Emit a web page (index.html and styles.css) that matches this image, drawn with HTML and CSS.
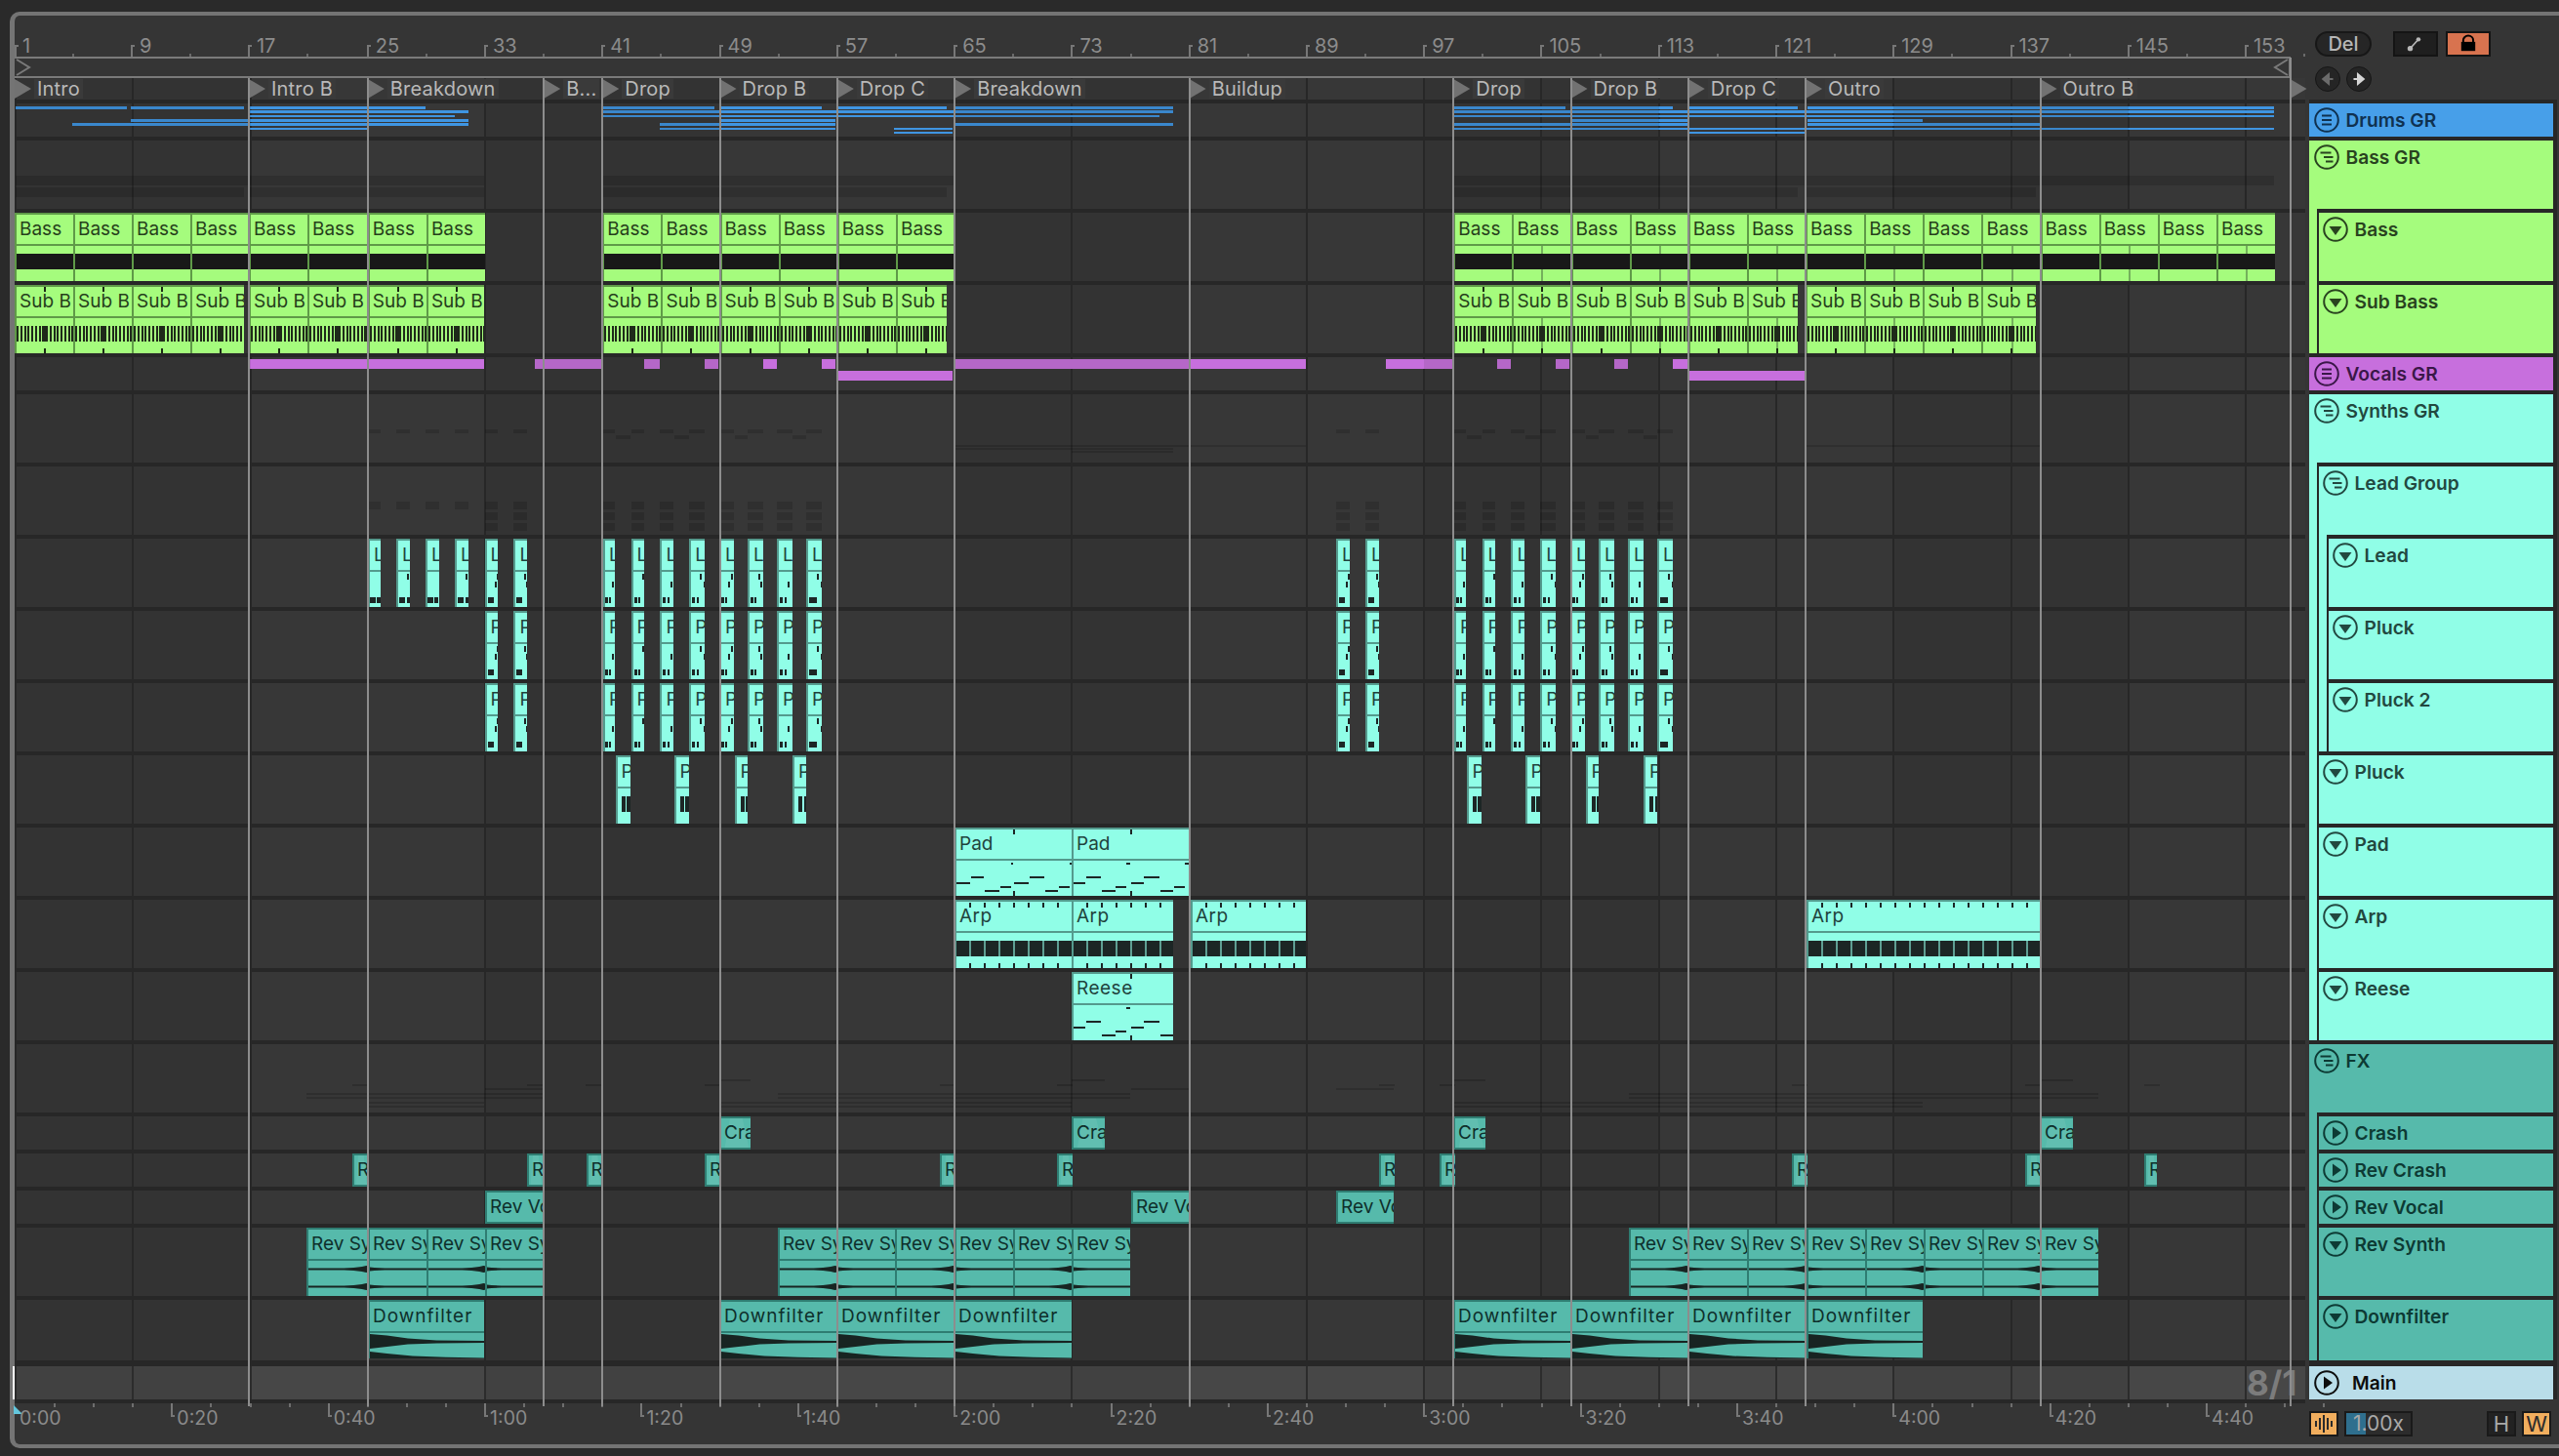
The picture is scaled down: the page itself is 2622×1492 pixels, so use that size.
FILE: index.html
```html
<!DOCTYPE html>
<html lang="en">
<head>
<meta charset="utf-8">
<title>Arrangement</title>
<link rel="stylesheet" href="styles.css">
</head>
<body>
<svg class="defs" width="0" height="0" aria-hidden="true">
  <symbol id="i-group" viewBox="0 0 26 26"><circle cx="13" cy="13" r="11.8" fill="none" stroke="currentColor" stroke-width="2"/><path d="M8 8.5h10M8 13h10M8 17.500h10" stroke="currentColor" stroke-width="2.200"/></symbol>
  <symbol id="i-stagger" viewBox="0 0 26 26"><circle cx="13" cy="13" r="11.8" fill="none" stroke="currentColor" stroke-width="2"/><path d="M6.500 8.500h11M10 13h9.500M12 17.500h7.500" stroke="currentColor" stroke-width="2.200"/></symbol>
  <symbol id="i-down" viewBox="0 0 26 26"><circle cx="13" cy="13" r="11.800" fill="none" stroke="currentColor" stroke-width="2"/><path d="M6.500 10h13L13 19z" fill="currentColor"/></symbol>
  <symbol id="i-right" viewBox="0 0 26 26"><circle cx="13" cy="13" r="11.800" fill="none" stroke="currentColor" stroke-width="2"/><path d="M10 6.500L19 13l-9 6.500z" fill="currentColor"/></symbol>
</svg>
<div class="frame">
  <main class="arr" id="arr">
    <div class="ruler" id="ruler"></div>
    <div class="brace">
      <svg class="brace-l" viewBox="0 0 16 18" width="16" height="18"><path d="M1 1L14 9L1 17" fill="none" stroke="#7a7a7a" stroke-width="2"/></svg>
      <svg class="brace-r" viewBox="0 0 16 18" width="16" height="18"><path d="M15 1L2 9L15 17" fill="none" stroke="#7a7a7a" stroke-width="2"/></svg>
    </div>
    <div class="locators lane-bg" id="locators"></div>
    <div class="lanes">
      <div class="lane lane-bg h34" id="l-drums"></div>
      <div class="lane lane-bg h70" id="l-bassgr"></div>
      <div class="lane lane-bg h70" id="l-bass"></div>
      <div class="lane lane-bg h70" id="l-sub"></div>
      <div class="lane lane-bg h34" id="l-vocals"></div>
      <div class="lane lane-bg h70" id="l-synths"></div>
      <div class="lane lane-bg h70" id="l-leadgrp"></div>
      <div class="lane lane-bg h70" id="l-lead"></div>
      <div class="lane lane-bg h70" id="l-pluck"></div>
      <div class="lane lane-bg h70" id="l-pluck2"></div>
      <div class="lane lane-bg h70" id="l-pluck3"></div>
      <div class="lane lane-bg h70" id="l-pad"></div>
      <div class="lane lane-bg h70" id="l-arp"></div>
      <div class="lane lane-bg h70" id="l-reese"></div>
      <div class="lane lane-bg h70" id="l-fx"></div>
      <div class="lane lane-bg h34" id="l-crash"></div>
      <div class="lane lane-bg h34" id="l-revcrash"></div>
      <div class="lane lane-bg h34" id="l-revvocal"></div>
      <div class="lane lane-bg h70" id="l-revsynth"></div>
      <div class="lane lane-bg h62" id="l-down"></div>
    </div>
    <div class="main-lane" id="l-main">
      <span class="playhead"></span>
      <span class="meter">8/1</span>
    </div>
    <div class="timeline" id="timeline"><span class="origin"></span></div>
  </main>

  <aside class="side">
    <div class="controls">
      <div class="ctl-row">
        <button class="pill">Del</button>
        <button class="sq sq-first"><svg viewBox="0 0 46 26" width="42" height="22"><path d="M17 18L26 8" stroke="#b8b8b8" stroke-width="2"/><circle cx="16.500" cy="18.500" r="3.200" fill="#b8b8b8"/><circle cx="26.500" cy="7.500" r="2.600" fill="#b8b8b8"/></svg></button>
        <button class="sq sq-lock"><svg viewBox="0 0 46 26" width="42" height="22"><path d="M17 11V8.500a6 5.500 0 0 1 12 0V11" fill="none" stroke="#000" stroke-width="2.400"/><rect x="14.500" y="10.500" width="17" height="11" fill="#000"/></svg></button>
      </div>
      <div class="ctl-row nav-row">
        <button class="nav"><svg viewBox="0 0 26 26" width="26" height="26"><path d="M19 13H10M14 8l-6 5 6 5z" stroke="#6b6b6b" stroke-width="2.400" fill="#6b6b6b"/></svg></button>
        <button class="nav"><svg viewBox="0 0 26 26" width="26" height="26"><path d="M7 13h9M12 8l6 5-6 5z" stroke="#d6d6d6" stroke-width="2.400" fill="#d6d6d6"/></svg></button>
      </div>
    </div>
    <div class="heads">
      <div class="thead h34 c-drums"><svg class="ico"><use href="#i-group"/></svg><span>Drums GR</span></div>
      <div class="group c-bass">
        <div class="thead h70"><svg class="ico"><use href="#i-stagger"/></svg><span>Bass GR</span></div>
        <div class="children">
          <div class="thead h70"><svg class="ico"><use href="#i-down"/></svg><span>Bass</span></div>
          <div class="thead h70"><svg class="ico"><use href="#i-down"/></svg><span>Sub Bass</span></div>
        </div>
      </div>
      <div class="thead h34 c-vocals"><svg class="ico"><use href="#i-group"/></svg><span>Vocals GR</span></div>
      <div class="group c-synths">
        <div class="thead h70"><svg class="ico"><use href="#i-stagger"/></svg><span>Synths GR</span></div>
        <div class="children">
          <div class="group">
            <div class="thead h70"><svg class="ico"><use href="#i-stagger"/></svg><span>Lead Group</span></div>
            <div class="children">
              <div class="thead h70"><svg class="ico"><use href="#i-down"/></svg><span>Lead</span></div>
              <div class="thead h70"><svg class="ico"><use href="#i-down"/></svg><span>Pluck</span></div>
              <div class="thead h70"><svg class="ico"><use href="#i-down"/></svg><span>Pluck 2</span></div>
            </div>
          </div>
          <div class="thead h70"><svg class="ico"><use href="#i-down"/></svg><span>Pluck</span></div>
          <div class="thead h70"><svg class="ico"><use href="#i-down"/></svg><span>Pad</span></div>
          <div class="thead h70"><svg class="ico"><use href="#i-down"/></svg><span>Arp</span></div>
          <div class="thead h70"><svg class="ico"><use href="#i-down"/></svg><span>Reese</span></div>
        </div>
      </div>
      <div class="group c-fx">
        <div class="thead h70"><svg class="ico"><use href="#i-stagger"/></svg><span>FX</span></div>
        <div class="children">
          <div class="thead h34"><svg class="ico"><use href="#i-right"/></svg><span>Crash</span></div>
          <div class="thead h34"><svg class="ico"><use href="#i-right"/></svg><span>Rev Crash</span></div>
          <div class="thead h34"><svg class="ico"><use href="#i-right"/></svg><span>Rev Vocal</span></div>
          <div class="thead h70"><svg class="ico"><use href="#i-down"/></svg><span>Rev Synth</span></div>
          <div class="thead h62"><svg class="ico"><use href="#i-down"/></svg><span>Downfilter</span></div>
        </div>
      </div>
      <div class="thead h34 c-main"><svg class="ico"><use href="#i-right"/></svg><span>Main</span></div>
    </div>
    <div class="foot">
      <button class="fbtn on"><svg viewBox="0 0 26 22" width="26" height="22"><path d="M5 8v6M9 5v12M13 2v18M17 5v12M21 8v6" stroke="#2b2b2b" stroke-width="2"/></svg></button>
      <div class="speed"><span class="speed-fill"></span><span class="speed-txt">1.00x</span></div>
      <button class="fbtn first-right">H</button>
      <button class="fbtn on">W</button>
    </div>
  </aside>
</div>
<script src="app.js"></script>
</body>
</html>
```
FILE: styles.css
```css
* { box-sizing: border-box; }
:root {
  --sep: #272727;
  --panel: #353535;
  --grid: #272727;
  --font: "Inter", "Liberation Sans", sans-serif;
}
html, body { margin: 0; padding: 0; }
body {
  width: 2622px; height: 1492px; overflow: hidden;
  background: #2a2a2a; font-family: var(--font);
}
.defs { position: absolute; }
.frame {
  margin: 12px 0 0 10px; height: 1472px; width: 2612px;
  border: solid #747474; border-width: 4px 0 4px 5px;
  border-radius: 10px 0 0 10px;
  background: var(--panel);
  display: flex;
}
.arr { position: relative; width: 2351px; flex: none; display: flex; flex-direction: column; }

/* ruler */
.ruler { position: relative; height: 42px; flex: none; }
.bar-tick { position: absolute; top: 30px; height: 12px; width: 4px; border: solid #777; border-width: 2px 0 0 2px; }
.bar-num { position: absolute; top: 18px; font-size: 20px; line-height: 26px; color: #8c8c8c; letter-spacing: -.1px; }
.mid-tick { position: absolute; top: 39px; height: 3px; width: 2px; background: #6a6a6a; }

.brace {
  position: relative; height: 22px; width: 2332px; flex: none;
  border: solid #7a7a7a; border-width: 2px 2px 2px 0;
}
.brace-l { position: absolute; left: 1px; top: 0; }
.brace-r { position: absolute; right: 0; top: 0; }

/* lanes */
.lane-bg {
  background-color: #343434;
  background-image:
    repeating-linear-gradient(90deg, var(--grid) 0, var(--grid) 2px, transparent 2px, transparent 120.267px),
    repeating-linear-gradient(90deg, #333333 0, #333333 240.533px, #373737 240.533px, #373737 481.067px);
  background-position: 0 0, 1px 0;
}
.locators { position: relative; height: 22px; width: 2347px; flex: none; }
.loc { position: absolute; top: 1px; height: 20px; display: flex; align-items: center; gap: 3px; }
.loc-tri { width: 17px; height: 20px; background: #727272; clip-path: polygon(0 0, 100% 50%, 0 100%); flex: none; }
.loc-name { font-size: 20px; line-height: 20px; letter-spacing: .2px; color: #b9b9b9; background: #3a3a3a; padding: 0 3px; white-space: nowrap; }

.lanes {
  width: 2347px; flex: none;
  background: var(--sep); border-top: 4px solid var(--sep);
  display: flex; flex-direction: column; gap: 4px;
}
.lane { position: relative; flex: none; }
.h34 { height: 34px; }
.h70 { height: 70px; }
.h62 { height: 62px; }

.main-lane {
  position: relative; width: 2347px; height: 40px; flex: none;
  border-top: 6px solid var(--sep);
  background-color: #444;
  background-image:
    repeating-linear-gradient(90deg, #2c2c2c 0, #2c2c2c 2px, transparent 2px, transparent 120.267px),
    repeating-linear-gradient(90deg, #414141 0, #414141 240.533px, #474747 240.533px, #474747 481.067px);
}
.playhead { position: absolute; left: -2px; top: 0; width: 2px; height: 34px; background: #fff; }
.meter {
  position: absolute; left: 2287px; top: -3px;
  font-size: 35px; font-weight: 700; line-height: 40px; color: #7c7c7c;
}

/* overview strips */
.ov { position: absolute; }
.ov-blue { height: 2.500px; background: #3f95e2; }
.ov-blue.dim { background: #3a87cc; }
.ov-purple { height: 10px; background: #c76fdd; }
.ov-purple.dim { background: #b567c8; }
.ov-dark { background: rgba(0, 0, 0, .14); }
.ov-faint { height: 1.500px; background: rgba(0, 0, 0, .16); }

/* clips */
.clip {
  position: absolute; top: 0; bottom: 0; overflow: hidden;
  display: flex; flex-direction: column;
  background: var(--c); color: var(--t);
  border-left: 2px solid var(--b); border-top: 2px solid var(--b);
}
.clip-title {
  flex: none; height: 32px; padding: 0 0 0 3px;
  font-size: 19px; line-height: 30px; white-space: nowrap; overflow: hidden;
  border-bottom: 2px solid var(--b);
}
.clip-narrow .clip-title { padding-left: 4px; }
.clip-wide .clip-title { letter-spacing: 1px; }
.clip-roomy .clip-title { letter-spacing: .5px; }
.clip-body { position: relative; flex: 1; }
.clip-solo { border-bottom: 2px solid var(--b); }
.clip-solo .clip-title { height: 100%; border-bottom: 0; position: relative; }
.g { --c: #a5fc7d; --b: #5f9a48; --t: #26401b; --d: #1a2a14; }
.t { --c: #90fee7; --b: #549a8d; --t: #1f433d; --d: #1c2625; }
.f { --c: #56baab; --b: #2f7d72; --t: #0e2f2b; --d: #182422; }
.wedge::before {
  content: ""; position: absolute; inset: 0;
  background: rgba(255, 255, 255, .07);
  clip-path: polygon(12% 100%, 30% 0, 72% 0, 95% 100%);
}

.band { position: absolute; left: 0; right: 0; top: 8px; height: 16px; background: #181818; }
.gm { position: absolute; top: 0; bottom: 0; width: 2px; background: #74b05c; }
.barcode {
  position: absolute; left: 0; right: 0; top: 8px; height: 16px;
  background-image:
    repeating-linear-gradient(90deg, transparent 0, transparent 26px, #1f2a1a 26px, #1f2a1a 30px),
    repeating-linear-gradient(90deg, #1f2a1a 0, #1f2a1a 2px, transparent 2px, transparent 3.760px);
}
.tick { position: absolute; width: 2px; height: 5px; background: var(--d); }
.tick-top { top: 0; }
.tick-bot { bottom: 0; }
.note { position: absolute; background: var(--d); }
.arp-band {
  position: absolute; left: 0; right: 0; top: 8px; height: 16px;
  background-color: var(--d);
  background-image: repeating-linear-gradient(90deg, transparent 0, transparent 13px, #5f9f93 13px, #5f9f93 15.033px);
}
.tick-strip {
  position: absolute; left: 0; right: 0; height: 5px;
  background-image: repeating-linear-gradient(90deg, transparent 0, transparent 13px, var(--d) 13px, var(--d) 15.033px);
}
.strip-top { top: 1px; }
.strip-bot { bottom: 0; }
.wave { position: absolute; left: 0; top: 0; width: 100%; height: 100%; fill: var(--d); }

/* overlay lines */
.locline { position: absolute; top: 64px; height: 1361px; width: 2px; background: #8d8d8d; pointer-events: none; }
.locline-end { top: 43px; height: 1382px; }

/* timeline */
.timeline { position: relative; width: 2347px; height: 46px; flex: none; border-top: 4px solid var(--sep); }
.t-tick { position: absolute; top: 0; width: 2px; height: 4px; background: #6e6e6e; }
.t-mark { position: absolute; top: 0; width: 4px; height: 14px; border: solid #777; border-width: 0 0 2px 2px; }
.t-num { position: absolute; top: 3px; font-size: 19.500px; line-height: 24px; color: #8a8a8a; }
.origin { position: absolute; left: -1px; top: 2px; width: 9px; height: 9px; background: #63c6dc; clip-path: polygon(0 0, 100% 100%, 0 100%); }

/* side panel */
.side { width: 256px; flex: none; display: flex; flex-direction: column; }
.controls { height: 86px; flex: none; padding: 16px 0 0 6px; display: flex; flex-direction: column; gap: 10px; }
.ctl-row { display: flex; align-items: center; }
button { font-family: var(--font); padding: 0; margin: 0; display: flex; align-items: center; justify-content: center; }
.pill { width: 58px; height: 26px; border-radius: 13px; border: 2px solid #171717; background: #262626; color: #b7b7b7; font-size: 20px; font-weight: 500; }
.sq { width: 46px; height: 26px; border: 2px solid #141414; background: #1f1f1f; margin-left: 8px; }
.sq-first { margin-left: 22px; }
.sq-lock { background: #d8734f; }
.nav-row { gap: 6px; }
.nav { width: 26px; height: 26px; border-radius: 50%; border: 1px solid #161616; background: #252525; }

.heads { width: 254px; flex: none; border-top: 4px solid var(--sep); background: var(--sep); padding-right: 4px; display: flex; flex-direction: column; gap: 4px; }
.group { background: var(--c); display: flex; flex-direction: column; }
.children {
  margin-left: 8px; border-left: 2px solid var(--sep); border-top: 4px solid var(--sep);
  background: var(--sep); display: flex; flex-direction: column; gap: 4px;
}
.thead {
  flex: none; display: flex; align-items: flex-start; gap: 6.500px;
  padding: 4px 0 0 5px;
  background: var(--c); color: var(--t);
  font-size: 19.200px; font-weight: 600; line-height: 26px;
}
.children .thead { padding-left: 4px; }
.ico { width: 26px; height: 26px; flex: none; display: block; }
.c-drums { --c: #479fe9; --t: #0f3150; }
.c-bass { --c: #a5fc7d; --t: #29431f; }
.c-vocals { --c: #c76fdd; --t: #3a1748; }
.c-synths { --c: #90fee7; --t: #224840; }
.c-fx { --c: #56baab; --t: #0d3a34; }
.c-main { --c: #b9dde9; --t: #0d0d0d; margin-top: 2px; gap: 13px; }

.foot { flex: 1; padding: 12px 8px 0 0; display: flex; align-items: flex-start; gap: 6px; }
.fbtn { width: 30px; height: 26px; border: 2px solid #1a1a1a; background: #222; color: #a9a9a9; font-size: 22px; }
.fbtn.on { background: #f1ae5e; color: #2a2a2a; }
.first-right { margin-left: auto; }
.speed { position: relative; width: 70px; height: 26px; border: 2px solid #1a1a1a; background: #2c2c2c; }
.speed-fill { position: absolute; left: 0; top: 0; bottom: 0; width: 20px; background: #2f6f8e; }
.speed-txt { position: relative; display: block; padding-left: 7px; font-size: 21px; line-height: 22px; color: #a9a9a9; }
```
FILE: app.js
```js
(function () {
  var BAR = 15.0333, ORIGIN = 15;
  var X = function (b) {
    if (b <= 21) return 15 + (b - 1) * 15;
    if (b < 25) return 315 + (b - 21) * 15.45;
    return 16 + (b - 1) * BAR;
  };
  var $ = function (id) { return document.getElementById(id); };

  function el(parent, cls, text) {
    var e = document.createElement('div');
    e.className = cls;
    if (text !== undefined) e.textContent = text;
    parent.appendChild(e);
    return e;
  }
  function box(e, left, top, width, height) {
    if (left !== null) e.style.left = left + 'px';
    if (top !== null) e.style.top = top + 'px';
    if (width !== null) e.style.width = width + 'px';
    if (height !== null) e.style.height = height + 'px';
    return e;
  }

  /* ---- bar ruler ---- */
  var ruler = $('ruler');
  for (var b = 1; b <= 153; b += 8) {
    box(el(ruler, 'bar-tick'), X(b) - ORIGIN - 1 + (b === 1 ? 1 : 0), null, null, null);
    box(el(ruler, 'bar-num', String(b)), X(b) - ORIGIN + 8, null, null, null);
    box(el(ruler, 'mid-tick'), X(b + 4) - ORIGIN - 1, null, null, null);
  }

  /* ---- locators ---- */
  var LOCS = [[1, 'Intro'], [17, 'Intro B'], [25, 'Breakdown'], [37, 'B...'], [41, 'Drop'], [49, 'Drop B'],
    [57, 'Drop C'], [65, 'Breakdown'], [81, 'Buildup'], [99, 'Drop'], [107, 'Drop B'], [115, 'Drop C'],
    [123, 'Outro'], [139, 'Outro B']];
  var arr = $('arr'), locs = $('locators');
  LOCS.forEach(function (l) {
    var x = X(l[0]) - ORIGIN;
    var d = box(el(locs, 'loc'), x, null, null, null);
    el(d, 'loc-tri');
    el(d, 'loc-name', l[1]);
    if (l[0] > 1) box(el(arr, 'locline'), x - 1, null, null, null);
  });
  var endX = 2346.5 - ORIGIN;
  var endLoc = box(el(locs, 'loc'), endX, null, null, null);
  el(endLoc, 'loc-tri');
  box(el(arr, 'locline locline-end'), endX - 1, null, null, null);

  /* ---- overview strips (colour dims every other 16 bars) ---- */
  var SECT = 240.533;
  function strip(lane, cls, x1, x2, top) {
    var cur = x1;
    while (cur < x2 - 0.1) {
      var n = Math.floor((cur - 16 + 0.5) / SECT);
      var stop = Math.min(x2, 16 + (n + 1) * SECT);
      var dim = n % 2 === 0 ? ' dim' : '';
      box(el(lane, 'ov ' + cls + dim), cur - ORIGIN, top, stop - cur, null);
      cur = stop;
    }
  }
  var blueY = [3.3, 7.3, 11.7, 16, 20.3, 24.7, 28.7];
  var BLUE = [
    [0, 16, 130], [0, 134, 250], [0, 256, 436], [0, 617, 732], [0, 738, 842], [0, 858, 970], [0, 978, 1202],
    [0, 1490, 1604], [0, 1610, 1714], [0, 1730, 1842], [0, 1852, 2330],
    [1, 256, 480], [1, 617, 1202], [1, 1490, 2330],
    [2, 256, 466], [2, 617, 1188], [2, 1490, 2330],
    [3, 134, 480], [3, 738, 856], [3, 1610, 1729], [3, 1852, 1970],
    [4, 74, 480], [4, 676, 856], [4, 978, 1202], [4, 1490, 1729], [4, 1852, 2090],
    [5, 256, 376], [5, 676, 856], [5, 916, 976], [5, 1490, 2330],
    [6, 916, 976], [6, 1730, 1850]
  ];
  BLUE.forEach(function (s) { strip($('l-drums'), 'ov-blue', s[1], s[2], blueY[s[0]]); });

  var PURPLE = [[256, 496, 2], [548, 616, 2], [660, 676, 2], [722, 736, 2], [782, 796, 2], [842, 856, 2],
    [858, 976, 14], [978, 1338, 2], [1420, 1488, 2], [1534, 1548, 2], [1594, 1608, 2], [1654, 1668, 2],
    [1714, 1729, 2], [1730, 1850, 14]];
  PURPLE.forEach(function (s) { strip($('l-vocals'), 'ov-purple', s[0], s[1], s[2]); });

  function dark(laneId, x1, x2, top, h) {
    box(el($(laneId), 'ov ov-dark'), x1 - ORIGIN, top, x2 - x1, h);
  }
  [[16, 496], [617, 977], [1489, 2330]].forEach(function (r) { dark('l-bassgr', r[0], r[1], 36, 10); });
  [[16, 250], [256, 496], [617, 970], [1489, 1842], [1851, 2086]].forEach(function (r) { dark('l-bassgr', r[0], r[1], 48, 10); });

  /* ---- clips: label is what fits on the clip ---- */
  function clip(laneId, kind, x, w, name) {
    var c = box(el($(laneId), 'clip ' + kind), x - ORIGIN, null, w, null);
    c.title_ = el(c, 'clip-title', name);
    c.body_ = el(c, 'clip-body');
    return c;
  }
  function soloClip(laneId, kind, x, w, name, extra) {
    var c = box(el($(laneId), 'clip clip-solo ' + kind + ' ' + (extra || '')), x - ORIGIN, null, w, null);
    el(c, 'clip-title', name);
    return c;
  }
  function tick(c, x, bot) {
    box(el(c, 'tick ' + (bot ? 'tick-bot' : 'tick-top')), x, null, null, null);
  }
  function gridMarks(c, startBar, bars) {
    for (var i = 1; i < bars; i++) {
      if ((startBar + i - 1) % 8 === 0) box(el(c.body_, 'gm'), i * BAR - 2, null, null, null);
    }
  }

  /* Bass */
  function range(a, z, s) { var o = []; for (var i = a; i <= z; i += s) o.push(i); return o; }
  range(1, 29, 4).concat(range(41, 61, 4), range(99, 151, 4)).forEach(function (b) {
    var c = clip('l-bass', 'g', X(b), X(b + 4) - X(b), 'Bass');
    gridMarks(c, b, 4);
    el(c.body_, 'band');
  });

  /* Sub Bass */
  [[1, 13, 250], [17, 29, 496], [41, 61, 970], [99, 119, 1842], [123, 135, 2086]].forEach(function (g) {
    range(g[0], g[1], 4).forEach(function (b) {
      var end = b === g[1] ? g[2] : X(b + 4);
      var c = clip('l-sub', 'g', X(b), end - X(b), 'Sub B');
      gridMarks(c, b, 4);
      el(c.body_, 'barcode');
      tick(c, 28);
      tick(c, 28, true);
    });
  });

  /* Lead / Pluck / Pluck 2 — short phrases; rows: 0,1 upper notes, 2 low notes */
  var rowY = [2, 10, 26];
  var P = {
    a: [[2, 0, 6], [2, 7, 4]],
    b: [[0, 9, 2], [2, 1, 6], [2, 9, 3]],
    c: [[0, 10, 2], [1, 8, 2], [2, 1, 6]],
    d: [[0, 9, 2], [1, 11, 2], [2, 1, 6]],
    e: [[0, 10, 2], [1, 7, 2], [2, 0, 3], [2, 4, 2]],
    f: [[0, 9, 2], [1, 11, 2], [2, 1, 3], [2, 5, 2]],
    g: [[1, 9, 2], [2, 1, 3], [2, 6, 2]],
    h: [[0, 9, 2], [1, 13, 2], [2, 1, 3], [2, 6, 2]],
    i: [[0, 9, 2], [1, 13, 2], [2, 1, 8]]
  };
  var INTRO = [[377, 13, 'a'], [406, 14, 'b'], [436, 14, 'a'], [466, 14, 'b']];
  var MAIN = [[496.6, 13.4, 'c'], [526.4, 14, 'd']];
  var DROP = [[618, 12, 'e'], [646.6, 13.4, 'f'], [676.4, 14, 'g'], [706.3, 16, 'h'],
    [737, 15, 'e'], [766, 16, 'f'], [796, 16, 'g'], [826, 16, 'i']];
  var MID = [[1369, 14, 'c'], [1399, 14, 'd']];
  var LATE = DROP.map(function (d) { return [d[0] + 872, d[1], d[2]]; });
  var ALL = MAIN.concat(DROP, MID, LATE);

  function phrase(laneId, name, list) {
    list.forEach(function (d) {
      var c = clip(laneId, 't clip-narrow', d[0], d[1], name);
      P[d[2]].forEach(function (n) {
        box(el(c.body_, 'note'), n[1], rowY[n[0]], n[2], 6);
      });
    });
  }
  phrase('l-lead', 'L', INTRO.concat(ALL));
  phrase('l-pluck', 'P', ALL);
  phrase('l-pluck2', 'P', ALL);

  var P3 = [[630.5, 15.5], [690.6, 15.4], [752.6, 13.4], [812, 14]];
  P3.concat(P3.map(function (p) { return [p[0] + 872, p[1]]; })).forEach(function (p) {
    var c = clip('l-pluck3', 't clip-narrow', p[0], p[1], 'P');
    box(el(c.body_, 'note'), 4, 8, 4, 16);
    box(el(c.body_, 'note'), 9.5, 8, 4, 16);
  });

  /* group overviews for Lead Group / Synths */
  INTRO.concat(ALL).forEach(function (d) {
    dark('l-leadgrp', d[0], d[0] + d[1], 36, 8);
    dark('l-synths', d[0], d[0] + d[1], 36, 4);
  });
  ALL.forEach(function (d) {
    dark('l-leadgrp', d[0], d[0] + d[1], 47, 8);
    dark('l-leadgrp', d[0], d[0] + d[1], 58, 8);
  });
  P3.concat(P3.map(function (p) { return [p[0] + 872, p[1]]; })).forEach(function (p) {
    dark('l-synths', p[0], p[0] + p[1], 42, 4);
  });
  dark('l-synths', 978, 1218, 52, 1.5);
  dark('l-synths', 978, 1202, 55, 1.5);
  dark('l-synths', 1220, 1338, 52, 1.5);
  dark('l-synths', 1851, 2090, 52, 1.5);
  dark('l-synths', 1098, 1202, 58, 1.5);

  /* Pad / Reese melodic notes: [y, x, w] */
  var PAD1 = [[2, 56, 2], [2, 116, 4], [16, 15, 13], [16, 75, 15], [22, 0, 14], [22, 59, 15],
    [26, 45, 11], [26, 105, 11], [30, 29, 15], [30, 91, 13]];
  var PAD2 = [[2, 54, 4], [2, 114, 4], [16, 13, 15], [16, 72, 16], [22, 0, 12], [22, 59, 13],
    [26, 43, 11], [26, 103, 11], [30, 29, 14], [30, 89, 13]];
  function melodic(laneId, kind, x, w, name, notes) {
    var c = clip(laneId, kind, x, w, name);
    notes.forEach(function (n) { box(el(c.body_, 'note'), n[1], n[0], n[2], 2); });
    tick(c, 58);
    tick(c, 58, true);
  }
  melodic('l-pad', 't', 978, 120, 'Pad', PAD1);
  melodic('l-pad', 't', 1098, 120, 'Pad', PAD2);
  melodic('l-reese', 't clip-roomy', 1098, 104, 'Reese', PAD2.filter(function (n) { return !(n[0] === 2 && n[1] > 100); }));

  /* Arp */
  [[978, 120], [1098, 104], [1220, 118], [1851, 239]].forEach(function (a) {
    var c = clip('l-arp', 't clip-roomy', a[0], a[1], 'Arp');
    el(c.body_, 'arp-band');
    el(c, 'tick-strip strip-top');
    el(c, 'tick-strip strip-bot');
  });

  /* FX short clips */
  [[737, 32], [1098, 34], [1489, 33], [2090, 34]].forEach(function (a) { soloClip('l-crash', 'f', a[0], a[1], 'Cra', 'wedge'); });
  [361, 540, 600.5, 722, 963, 1083, 1413, 1475, 1836, 2075, 2197].forEach(function (x) {
    soloClip('l-revcrash', 'f', x, x === 2197 ? 13 : 15.5, 'R', 'wedge');
  });
  [497, 1159, 1369].forEach(function (x) { soloClip('l-revvocal', 'f', x, 59, 'Rev Vo'); });

  /* Rev Synth waveforms */
  var NS = 'http://www.w3.org/2000/svg';
  function wave(body, vb, paths) {
    var s = document.createElementNS(NS, 'svg');
    s.setAttribute('viewBox', vb);
    s.setAttribute('preserveAspectRatio', 'none');
    s.setAttribute('class', 'wave');
    paths.forEach(function (d) {
      var p = document.createElementNS(NS, 'path');
      p.setAttribute('d', d);
      s.appendChild(p);
    });
    body.appendChild(s);
  }
  var SW_R = function (y) {
    return 'M0 ' + (y - 1) + 'L60 ' + (y - 1) + 'L76 ' + (y - 1.4) + 'L90 ' + (y - 2.4) + 'L97 ' + (y - 3.6) + 'L100 ' + (y - 3.2) +
      'L100 ' + (y + 3.2) + 'L97 ' + (y + 3.6) + 'L90 ' + (y + 2.4) + 'L76 ' + (y + 1.4) + 'L60 ' + (y + 1) + 'L0 ' + (y + 1) + 'Z';
  };
  var SW_L = function (y) {
    return 'M0 ' + (y - 2) + 'L8 ' + (y - 1.5) + 'L26 ' + (y - 1) + 'L100 ' + (y - 1) + 'L100 ' + (y + 1) + 'L26 ' + (y + 1) + 'L8 ' + (y + 1.5) + 'L0 ' + (y + 2) + 'Z';
  };
  var REV = [[314, 63], [377, 60], [437, 60], [497, 59], [797, 60], [857, 60], [917, 61], [978, 60], [1038, 60], [1098, 60],
    [1669, 60], [1729, 61], [1790, 61], [1851, 60], [1911, 60], [1971, 60], [2031, 59], [2090, 60]];
  REV.forEach(function (r, i) {
    var c = clip('l-revsynth', 'f', r[0], r[1], 'Rev Sy');
    var swell = i % 2 === 0 ? SW_R : SW_L;
    wave(c.body_, '0 0 100 36', [swell(8.5), swell(26.5)]);
  });

  /* Downfilter waveforms */
  var DN = [[377, 119], [737, 120], [857, 120], [977, 121], [1489, 120], [1609, 120], [1729, 122], [1851, 119]];
  DN.forEach(function (r) {
    var c = clip('l-down', 'f clip-wide', r[0], r[1], 'Downfilter');
    c.style.bottom = '2px';
    wave(c.body_, '0 0 120 26', [
      'M0 1L18 2.500L40 5.500L70 7.500L120 8L120 10L70 10.500L40 11.500L18 14L0 16Z',
      'M0 19L18 21L45 23.500L80 24.800L120 25.500L120 26L0 26Z'
    ]);
  });

  /* FX group overview */
  var addFaint = function (x, w, y) { box(el($('l-fx'), 'ov ov-faint'), x - ORIGIN, y, w, null); };
  [[737, 32], [1098, 34], [1489, 33], [2090, 34]].forEach(function (a) { addFaint(a[0], a[1], 36); });
  [361, 540, 600, 722, 963, 1083, 1413, 1475, 1836, 2075, 2197].forEach(function (x) { addFaint(x, 16, 41); });
  [497, 1159, 1369].forEach(function (x) { addFaint(x, 59, 45); });
  REV.forEach(function (r) { addFaint(r[0], r[1], 50); addFaint(r[0], r[1], 54); });
  DN.forEach(function (r) { addFaint(r[0], r[1], 59); addFaint(r[0], r[1], 63); });

  /* ---- time ruler ---- */
  var tl = $('timeline'), STEP = 160.36;
  for (var t = 0; t <= 14; t++) {
    var tx = 16 + t * STEP - ORIGIN;
    var secs = t * 20, m = Math.floor(secs / 60), ss = secs % 60;
    if (t > 0) box(el(tl, 't-mark'), tx - 1, null, null, null);
    box(el(tl, 't-num', m + ':' + (ss < 10 ? '0' + ss : ss)), tx + (t > 0 ? 5 : 4), null, null, null);
    for (var q = 1; q < 4; q++) box(el(tl, 't-tick'), tx + q * STEP / 4 - 1, null, null, null);
  }
})();
```
